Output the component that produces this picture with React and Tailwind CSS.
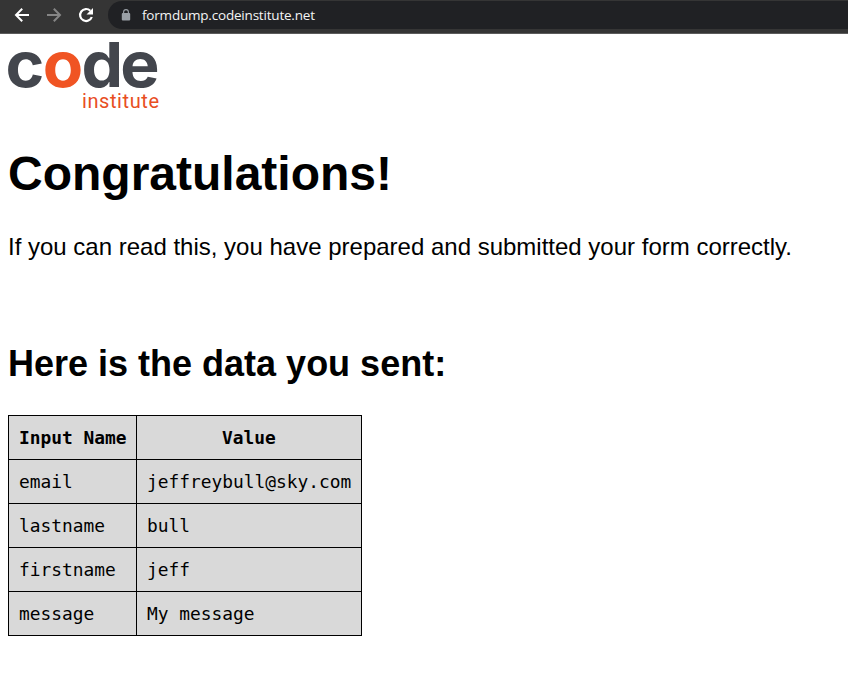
const rows = [
  ["email", "jeffreybull@sky.com"],
  ["lastname", "bull"],
  ["firstname", "jeff"],
  ["message", "My message"],
];

function Toolbar() {
  return (
    <header className="flex h-[34px] items-start border-b border-[#5b5b5b] bg-[#353535]">
      <svg className="h-[33px] w-[108px] shrink-0" viewBox="0 0 108 33" fill="none" strokeWidth="2">
        <path d="M29 15H16.5M22.2 8.7L16 15l6.200 6.300" stroke="#fff" />
        <path d="M47 15H59.500M53.800 8.700L60 15l-6.200 6.300" stroke="#858585" />
        <path d="M90.300 10.700A6 6 0 1 0 91.800 17" stroke="#fff" strokeWidth="2.200" />
        <path d="M93 8v6.500h-6.500z" fill="#fff" />
      </svg>
      <div className="mt-px flex h-7 flex-1 items-center rounded-l-full bg-[#202124] pl-[13px]">
        <svg className="h-3 w-[10px]" viewBox="0 0 10 12">
          <rect x="0.800" y="4" width="8.400" height="7.500" rx="1" fill="#9aa0a6" />
          <path d="M2.600 4.500V3a2.400 2.400 0 0 1 4.800 0v1.500" fill="none" stroke="#9aa0a6" strokeWidth="1.100" />
        </svg>
        <span className="ml-[11px] font-['Open_Sans',sans-serif] text-[13.5px] leading-7 tracking-[-0.2px] text-[#f4f4f4]">
          formdump.codeinstitute.net
        </span>
      </div>
    </header>
  );
}

function Logo() {
  return (
    <svg className="h-[68px] w-[152px]" viewBox="0 0 152 68" role="img" aria-label="code institute">
      <g transform="scale(1.04 1)">
        <text
          x="-2.300 33.300 70.600 107.900"
          y="44.700"
          className="fill-[#43464d] font-['Inter',sans-serif] text-[63.5px] font-bold"
        >
          c<tspan className="fill-[#f05423]">o</tspan>de
        </text>
      </g>
      <text
        x="74"
        y="66"
        textLength="77"
        className="fill-[#e84e1f] font-['Roboto',sans-serif] text-[20px]"
      >
        institute
      </text>
    </svg>
  );
}

export default function App() {
  return (
    <div className="h-[699px] w-[848px] overflow-hidden bg-white text-black">
      <Toolbar />
      <main className="flex flex-col items-start px-2 pt-2 font-['Liberation_Sans',Arial,sans-serif]">
        <Logo />
        <h1 className="mt-9 text-[48px] leading-[55px] font-bold">Congratulations!</h1>
        <p className="mt-8 text-2xl leading-7">
          If you can read this, you have prepared and submitted your form correctly.
        </p>
        <h2 className="mt-[82px] text-4xl leading-[41px] font-bold">Here is the data you sent:</h2>
        <table className="mt-[31px] w-[354px] table-fixed border-collapse bg-[#d9d9d9] font-['DejaVu_Sans_Mono',monospace] text-[17.88px] leading-[23px]">
          <colgroup>
            <col className="w-[128px]" />
            <col />
          </colgroup>
          <thead>
            <tr className="h-11">
              <th className="border border-black px-[10px] whitespace-nowrap">Input Name</th>
              <th className="border border-black px-[10px]">Value</th>
            </tr>
          </thead>
          <tbody>
            {rows.map(([name, value]) => (
              <tr key={name} className="h-11">
                <td className="border border-black px-[10px]">{name}</td>
                <td className="border border-black px-[10px] whitespace-nowrap">{value}</td>
              </tr>
            ))}
          </tbody>
        </table>
      </main>
    </div>
  );
}
